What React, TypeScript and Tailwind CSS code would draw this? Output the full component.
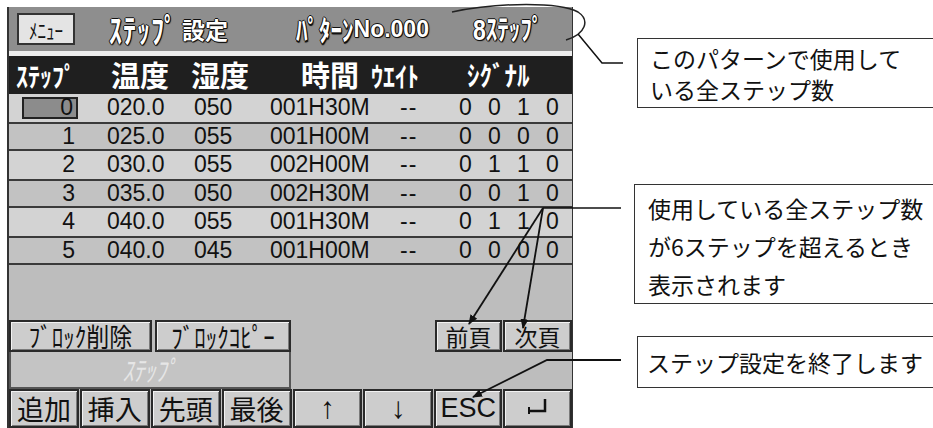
import React from 'react';

const jp = "font-['Noto_Sans_CJK_JP','Noto_Sans',sans-serif]";
const num = "font-['Liberation_Sans','Noto_Sans_CJK_JP',sans-serif]";
const outline = '[text-shadow:1px_0_0_#111,-1px_0_0_#111,0_1px_0_#111,0_-1px_0_#111,1px_1px_1px_#000]';
// half-width katakana on the LCD is drawn tall and narrow
const tall = 'inline-block scale-y-[1.25]';

type Row = { step: string; temp: string; hum: string; time: string; sig: string[] };

const rows: Row[] = [
  { step: '0', temp: '020.0', hum: '050', time: '001H30M', sig: ['0', '0', '1', '0'] },
  { step: '1', temp: '025.0', hum: '055', time: '001H00M', sig: ['0', '0', '0', '0'] },
  { step: '2', temp: '030.0', hum: '055', time: '002H00M', sig: ['0', '1', '1', '0'] },
  { step: '3', temp: '035.0', hum: '050', time: '002H30M', sig: ['0', '0', '1', '0'] },
  { step: '4', temp: '040.0', hum: '055', time: '001H30M', sig: ['0', '1', '1', '0'] },
  { step: '5', temp: '040.0', hum: '045', time: '001H00M', sig: ['0', '0', '0', '0'] },
];

const Key: React.FC<{ w: string; children: React.ReactNode; className?: string }> = ({ w, children, className }) => (
  <div
    className={`${w} h-full flex items-center justify-center bg-[#cdcdcd] border-2 border-[#2a2a2a] shadow-[inset_1px_1px_0_#f2f2f2,inset_-1px_-1px_0_#7a7a7a] text-[#111] ${className ?? ''}`}
  >
    {children}
  </div>
);

const TableRow: React.FC<{ row: Row; i: number }> = ({ row, i }) => {
  const boxed = i % 2 === 1;
  return (
    <div
      className={`h-[29px] flex items-center text-[#111] ${num} text-[23px] leading-none ${
        boxed ? 'bg-[#c2c2c2] border-y-2 border-[#3a3a3a]' : 'bg-[#d3d3d3]'
      }`}
    >
      <div className="w-[69px] flex justify-end">
        <div
          className={`w-[56px] h-[22px] flex items-center justify-end pr-[3px] ${
            i === 0 ? 'bg-[#8c8c8c] border-2 border-[#222]' : ''
          }`}
        >
          {row.step}
        </div>
      </div>
      <div className="w-[110px] pl-[29px]">{row.temp}</div>
      <div className="w-[76px] pl-[6px]">{row.hum}</div>
      <div className="w-[118px] pl-[6px]">{row.time}</div>
      <div className="w-[69px] pl-[18px] tracking-[1px]">--</div>
      <div className="flex">
        {row.sig.map((s, k) => (
          <div key={k} className="w-[29px] text-center">
            {s}
          </div>
        ))}
      </div>
    </div>
  );
};

const Lcd: React.FC = () => (
  <div className="w-[566px] ml-[7px] mt-[7px] flex flex-col border-l-2 border-r border-[#333] bg-[#bdbdbd]">
    {/* title bar */}
    <div className={`h-[45px] flex items-center bg-[#8e8e8e] text-white ${jp} ${outline} font-bold leading-none`}>
      <div className="ml-[8px] w-[58px] h-[32px] flex items-center justify-center bg-[#e4e4e4] border-2 border-[#333] text-[#111] text-[17px] [text-shadow:none] font-normal">
        <span className={tall}>ﾒﾆｭｰ</span>
      </div>
      <span className={`ml-[34px] text-[26px] tracking-[1px] ${tall}`}>ｽﾃｯﾌﾟ</span>
      <span className="ml-[4px] text-[23px]">設定</span>
      <span className={`ml-[68px] text-[23px] ${tall}`}>ﾊﾟﾀｰﾝ</span>
      <span className={`${num} text-[23px]`}>No.000</span>
      <span className={`ml-[44px] text-[23px] ${tall}`}>
        <span className={num}>8</span>ｽﾃｯﾌﾟ
      </span>
    </div>
    <div className="h-[5px] bg-[#ededed]" />
    {/* header */}
    <div className={`h-[38px] flex items-center bg-[#1f1f1f] text-white ${jp} font-bold leading-none`}>
      <span className="ml-[7px] w-[95px]">
        <span className={`text-[24px] inline-block scale-y-[1.15]`}>ｽﾃｯﾌﾟ</span>
      </span>
      <span className="w-[80px] text-[29px]">温度</span>
      <span className="w-[110px] text-[29px]">湿度</span>
      <span className="w-[70px] text-[29px]">時間</span>
      <span className="w-[96px]">
        <span className={`text-[24px] inline-block scale-y-[1.15]`}>ｳｴｲﾄ</span>
      </span>
      <span className={`text-[25px] inline-block scale-y-[1.1]`}>ｼｸﾞﾅﾙ</span>
    </div>
    {/* rows */}
    {rows.map((r, i) => (
      <TableRow key={i} row={r} i={i} />
    ))}
    <div className="h-[56px] bg-[#bdbdbd]" />
    {/* block buttons */}
    <div className={`h-[33px] flex ${jp} text-[23px] leading-none`}>
      <Key w="w-[143px]">
        <span className="inline-block scale-y-[1.15]">ﾌﾞﾛｯｸ削除</span>
      </Key>
      <Key w="w-[136px] ml-[3px]">
        <span className="inline-block scale-y-[1.2]">ﾌﾞﾛｯｸｺﾋﾟｰ</span>
      </Key>
      <div className="flex-1" />
      <Key w="w-[67px]">前頁</Key>
      <Key w="w-[69px] ml-[1px]">次頁</Key>
    </div>
    <div className="h-[37px] flex">
      <div className={`w-[282px] h-full flex items-center justify-center border-2 border-t-0 border-[#555] bg-[#c4c4c4] ${jp} text-[22px] italic text-[#e6e6e6]`}>
        <span className={tall}>ｽﾃｯﾌﾟ</span>
      </div>
    </div>
    {/* bottom keys */}
    <div className={`h-[40px] flex gap-[1px] ${jp} text-[27px] leading-none`}>
      <Key w="w-[70px]">追加</Key>
      <Key w="w-[70px]">挿入</Key>
      <Key w="w-[70px]">先頭</Key>
      <Key w="w-[70px]">最後</Key>
      <Key w="w-[70px]" className={`${num} text-[30px]`}>↑</Key>
      <Key w="w-[70px]" className={`${num} text-[30px]`}>↓</Key>
      <Key w="w-[68px]" className={`${num} text-[27px]`}>ESC</Key>
      <Key w="w-[69px]">
        <svg width="26" height="20" viewBox="0 0 26 20" className="mb-[2px]">
          <path d="M20 2 V14 H4" fill="none" stroke="#111" strokeWidth="2.5" />
          <path d="M4 10 V17" fill="none" stroke="#111" strokeWidth="2" />
        </svg>
      </Key>
    </div>
  </div>
);

const Callout: React.FC<{ className: string; children: React.ReactNode }> = ({ className, children }) => (
  <div className={`w-[320px] border border-[#333] bg-white text-[#111] ${jp} ${className}`}>{children}</div>
);

export default function App() {
  return (
    <div className="relative w-[933px] h-[428px] overflow-hidden bg-white flex">
      <Lcd />
      <div className="flex flex-col pl-[64px]">
        <Callout className="mt-[38px] h-[70px] pl-[12px] pt-[4px] text-[23px] leading-[31px]">
          <div>このパターンで使用して</div>
          <div>いる全ステップ数</div>
        </Callout>
        <Callout className="mt-[76px] h-[120px] ml-[-3px] pl-[13px] pt-[4px] text-[23px] leading-[38px]">
          <div>使用している全ステップ数</div>
          <div>が6ステップを超えるとき</div>
          <div>表示されます</div>
        </Callout>
        <Callout className="mt-[32px] h-[52px] pl-[9px] pt-[10px] text-[23px] leading-[30px]">
          <div>ステップ設定を終了します</div>
        </Callout>
      </div>
      <svg className="absolute inset-0 pointer-events-none" width="933" height="428" viewBox="0 0 933 428">
        <defs>
          <marker id="ah" markerWidth="10" markerHeight="8" refX="9" refY="4" orient="auto" markerUnits="userSpaceOnUse">
            <path d="M0 0 L10 4 L0 8 Z" fill="#111" />
          </marker>
        </defs>
        <path d="M452 12 C 500 2, 560 2, 578 12 C 590 20, 586 34, 566 40" fill="none" stroke="#222" strokeWidth="1.5" />
        <path d="M578 34 L602 63 L623 63" fill="none" stroke="#111" strokeWidth="1.5" />
        <path d="M621 208 L543 208" fill="none" stroke="#111" strokeWidth="1.5" />
        <path d="M543 208 L469 324" fill="none" stroke="#111" strokeWidth="1.8" markerEnd="url(#ah)" />
        <path d="M543 208 L523 328" fill="none" stroke="#111" strokeWidth="1.8" markerEnd="url(#ah)" />
        <path d="M621 360 L547 360 L473 397" fill="none" stroke="#111" strokeWidth="1.8" markerEnd="url(#ah)" />
      </svg>
    </div>
  );
}
